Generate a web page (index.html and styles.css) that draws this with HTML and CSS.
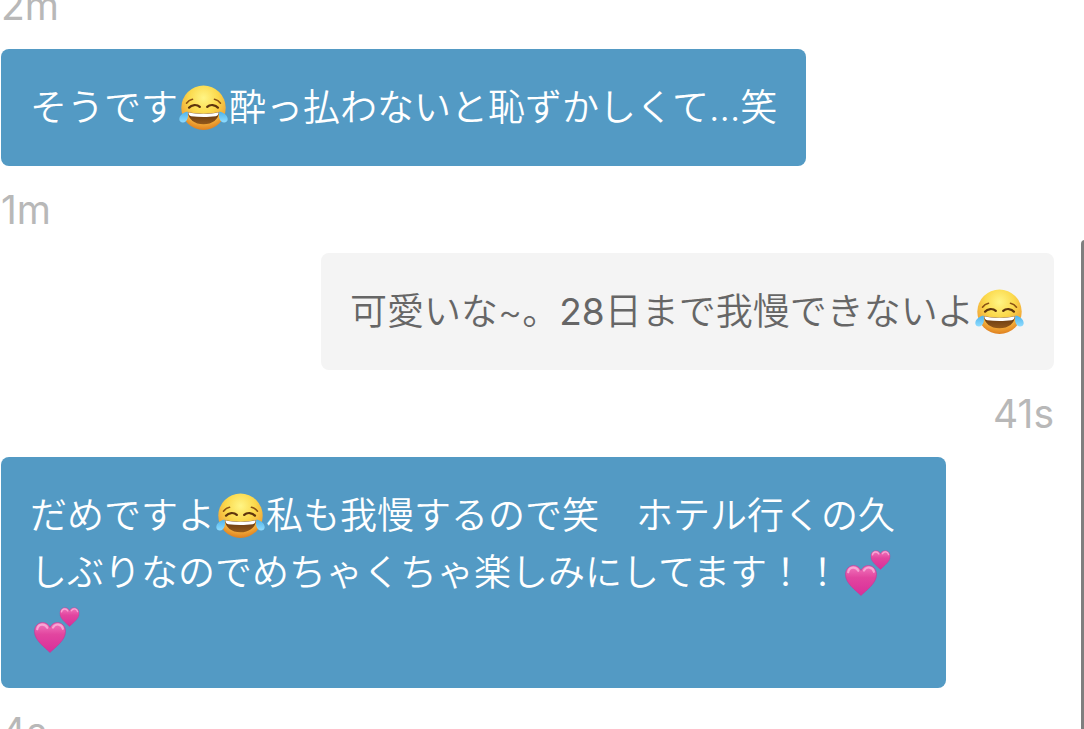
FILE: index.html
```
<!DOCTYPE html>
<html lang="ja">
<head>
<meta charset="utf-8">
<meta name="viewport" content="width=device-width, initial-scale=1">
<title>Chat</title>
<link rel="stylesheet" href="styles.css">
</head>
<body>
<svg class="defs" aria-hidden="true">
  <defs>
    <radialGradient id="face" cx="50%" cy="28%" r="74%">
      <stop offset="0" stop-color="#fff585"/>
      <stop offset=".45" stop-color="#fbd94c"/>
      <stop offset=".78" stop-color="#f2aa38"/>
      <stop offset="1" stop-color="#dc7a1c"/>
    </radialGradient>
    <linearGradient id="mouth" x1="0" y1="0" x2="0" y2="1">
      <stop offset="0" stop-color="#5f3410"/>
      <stop offset="1" stop-color="#94591a"/>
    </linearGradient>
    <linearGradient id="tear" x1="0" y1="0" x2="0" y2="1">
      <stop offset="0" stop-color="#4fb3ea"/>
      <stop offset="1" stop-color="#8fdcff"/>
    </linearGradient>
    <linearGradient id="pink" x1="0" y1="0" x2="0" y2="1">
      <stop offset="0" stop-color="#f277bd"/>
      <stop offset=".4" stop-color="#e2459f"/>
      <stop offset="1" stop-color="#d92e9a"/>
    </linearGradient>
    <symbol id="joy" viewBox="0 0 49 46">
      <circle cx="24.5" cy="22.7" r="22.2" fill="url(#face)"/>
      <path d="M7.500 18.200c1.500-2 3.500-3.300 6-3.900M41.500 18.200c-1.500-2-3.500-3.300-6-3.900" fill="none" stroke="#8b5214" stroke-width="1.600" stroke-linecap="round"/>
      <path d="M10 22.700c2.500-3.200 8-3.600 10.800-.8M28.200 21.900c2.800-2.800 8.300-2.400 10.800.8" fill="none" stroke="#5e350d" stroke-width="2.200" stroke-linecap="round"/>
      <path d="M8.800 27c8.700 2.200 22.700 2.200 31.400 0-.6 7.300-6.700 12.300-15.700 12.300S9.400 34.300 8.800 27Z" fill="url(#mouth)"/>
      <path d="M9.300 27.300c8.500 2 21.900 2 30.400 0-.2 2.600-1 3.700-3 4-7.500 1-16.900 1-24.400 0-2-.3-2.800-1.400-3-4Z" fill="#fff"/>
      <path d="M8.500 26.500C3.600 27.500.5 30.800.3 34c-.2 3.300 4 4.700 6.600 2.300C9.200 34.200 9.400 30 8.500 26.500ZM40.500 26.500c4.900 1 8 4.300 8.200 7.500.2 3.300-4 4.700-6.600 2.300-2.300-2.100-2.500-6.300-1.600-9.800Z" fill="url(#tear)"/>
    </symbol>
    <symbol id="heart" viewBox="0 0 32 31">
      <path d="M16 30.500C11 25.500.5 18.500.5 9.500.5 4.200 4.200.6 8.600.6c3.300 0 6 1.900 7.400 4.900C17.400 2.500 20.100.6 23.400.6c4.400 0 8.100 3.600 8.100 8.900 0 9-10.500 16-15.500 21Z" fill="url(#pink)" stroke="#c33b98" stroke-width=".7"/>
      <path d="M3.200 7.200C4.300 1.700 11 1.200 13.300 5.800M19 5.500c2.700-4.600 8.800-3.700 9.900 1.300" fill="none" stroke="#fbb9df" stroke-width="2.200" stroke-linecap="round" opacity=".75"/>
    </symbol>
    <symbol id="hearts" viewBox="0 0 49 46">
      <use href="#heart" x="3" y="15" width="32" height="31"/>
      <use href="#heart" x="28.500" y="0" width="20" height="20"/>
    </symbol>
  </defs>
</svg>
<main class="chat">
  <ol class="thread">
    <li class="message">
      <time class="time">2m</time>
    </li>
    <li class="message">
      <p class="bubble">そうです<svg class="emoji" role="img" aria-label="😂"><use href="#joy"/></svg>酔っ払わないと恥ずかしくて…笑</p>
      <time class="time">1m</time>
    </li>
    <li class="message message-own">
      <p class="bubble">可愛いな~。<span class="number">28</span>日まで我慢できないよ<svg class="emoji" role="img" aria-label="😂"><use href="#joy"/></svg></p>
      <time class="time">41s</time>
    </li>
    <li class="message">
      <p class="bubble">だめですよ<svg class="emoji" role="img" aria-label="😂"><use href="#joy"/></svg>私も我慢するので笑　ホテル行くの久しぶりなのでめちゃくちゃ楽しみにしてます！！<svg class="emoji" role="img" aria-label="💕"><use href="#hearts"/></svg><svg class="emoji" role="img" aria-label="💕"><use href="#hearts"/></svg></p>
      <time class="time">4s</time>
    </li>
  </ol>
  <div class="scroll-thumb"></div>
</main>
</body>
</html>
```
FILE: styles.css
```
* {
  box-sizing: border-box;
}

body {
  margin: 0;
  background: #fff;
  font-family: Inter, "Noto Sans CJK JP", sans-serif;
  font-size: 37px;
  line-height: 57px;
}

.defs {
  position: absolute;
  width: 0;
  height: 0;
}

.chat {
  position: relative;
  height: 100vh;
  overflow: hidden;
}

/* The thread is scrolled part-way through the first visible entry. */
.thread {
  display: flex;
  flex-direction: column;
  gap: 15px;
  margin: -23px 0 0;
  padding: 0 30px 0 1px;
  list-style: none;
}

.message {
  display: flex;
  flex-direction: column;
  align-items: flex-start;
  gap: 15px;
}

.message-own {
  align-items: flex-end;
}

.bubble {
  max-width: calc(100% - 108px);
  margin: 0;
  padding: 30px 29px;
  border-radius: 8px;
  background: #539ac4;
  color: #fff;
  font-weight: 350;
}

.message-own .bubble {
  background: #f4f4f4;
  color: #666;
}

.number {
  font-weight: 400;
}

.time {
  color: #b8b8b8;
  font-size: 39px;
}

.emoji {
  width: 49px;
  height: 46px;
  margin: 0 1px;
  vertical-align: -10px;
}

.scroll-thumb {
  position: absolute;
  top: 240px;
  right: -5px;
  bottom: -8px;
  width: 8px;
  border-radius: 4px;
  background: #7f7f7f;
}
```
